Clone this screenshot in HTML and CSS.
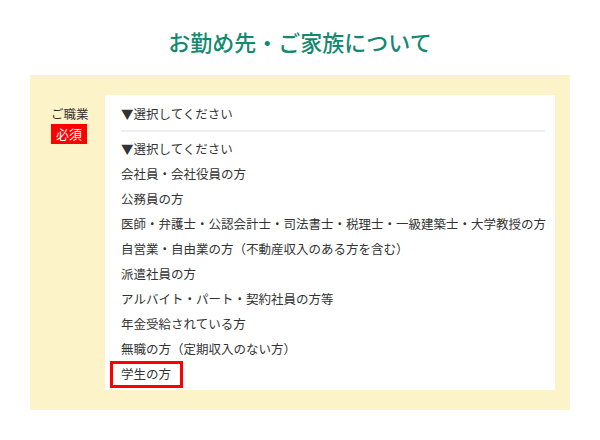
FILE: index.html
```html
<!DOCTYPE html>
<html lang="ja">
<head>
<meta charset="utf-8">
<title>お勤め先・ご家族について</title>
<link rel="stylesheet" href="styles.css">
</head>
<body>
<h1 class="title">お勤め先・ご家族について</h1>
<section class="panel">
  <div class="label">
    <div class="label-text">ご職業</div>
    <span class="badge">必須</span>
  </div>
  <div class="select-box">
    <div class="select-head">▼選択してください</div>
    <hr class="sep">
    <ul class="options">
      <li>▼選択してください</li>
      <li>会社員・会社役員の方</li>
      <li>公務員の方</li>
      <li>医師・弁護士・公認会計士・司法書士・税理士・一級建築士・大学教授の方</li>
      <li>自営業・自由業の方（不動産収入のある方を含む）</li>
      <li>派遣社員の方</li>
      <li>アルバイト・パート・契約社員の方等</li>
      <li>年金受給されている方</li>
      <li>無職の方（定期収入のない方）</li>
      <li><span class="hl">学生の方</span></li>
    </ul>
  </div>
</section>
</body>
</html>
```

FILE: styles.css
```css
html, body {
  margin: 0;
  padding: 0;
  background: #fff;
}
body {
  font-family: "Noto Sans CJK JP", "Noto Sans", sans-serif;
  color: #333;
  width: 600px;
}
.title {
  margin: 26px 0 19px;
  text-align: center;
  font-size: 22px;
  line-height: 30px;
  font-weight: 500;
  color: #138a70;
}
.panel {
  margin: 0 30px;
  background: #fdf3c9;
  padding: 20px 15px 20px 21px;
  display: flex;
}
.label {
  width: 54px;
  flex: none;
  padding-top: 9px;
  font-size: 12.5px;
}
.label-text {
  line-height: 20px;
}
.badge {
  display: inline-block;
  background: #f00;
  color: #fff;
  font-size: 13px;
  line-height: 20px;
  padding: 0 5px;
}
.select-box {
  flex: 1;
  min-width: 0;
  background: #fff;
  padding: 6px 10px 4px 16px;
  font-size: 12.5px;
}
.select-head {
  line-height: 25px;
}
.sep {
  margin: 4px 0 4px;
  border: 0;
  height: 2px;
  background: #eee;
}
.options {
  list-style: none;
  margin: 0;
  padding: 0;
}
.options li {
  line-height: 25px;
  white-space: nowrap;
}
.hl {
  display: inline-block;
  position: relative;
}
.hl::after {
  content: "";
  position: absolute;
  left: -11px;
  right: -12px;
  top: 0;
  bottom: -2px;
  border: 3px solid #f00;
}
```
